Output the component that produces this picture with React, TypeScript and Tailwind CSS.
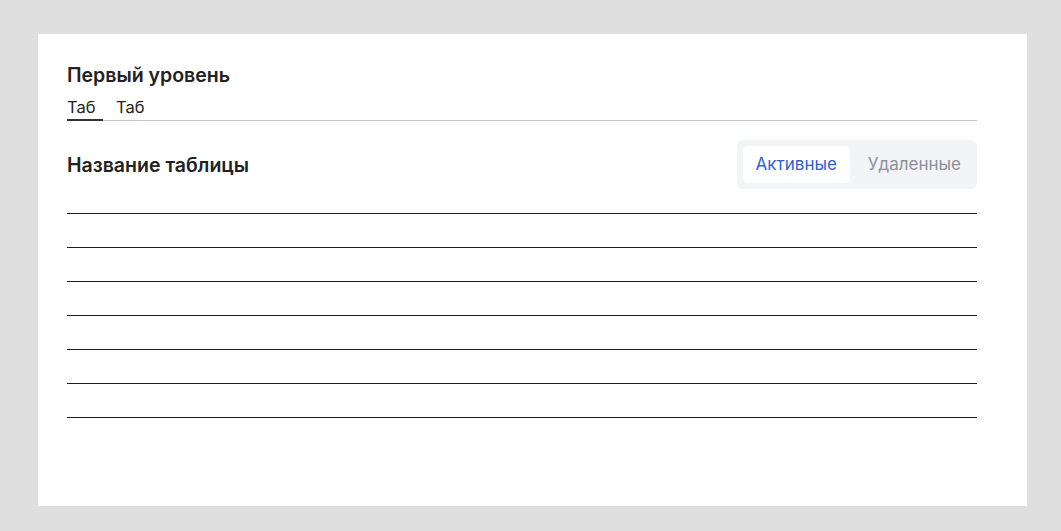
import React from "react";

export default function App() {
  const rows = [0, 1, 2, 3, 4, 5];
  return (
    <div className="w-[1061px] h-[531px] bg-[#dfdfdf] pt-[34px] pl-[38px] font-['Inter',sans-serif]">
      <div className="w-[989px] h-[472px] bg-white pl-[29px] pr-[50px] pt-[29px]">
        <div className="text-[19.5px] leading-[24px] font-semibold text-[#222]">Первый уровень</div>
        <div className="flex gap-[13px] border-b border-[#c6c6c6] mt-[8px] h-[26px] text-[16.5px] leading-[24px] text-[#222]">
          <div className="w-[36px] h-[26px] border-b-2 border-[#333] -mb-px">Таб</div>
          <div>Таб</div>
        </div>
        <div className="flex items-center justify-between mt-[19px]">
          <div className="text-[19.5px] leading-[24px] font-semibold text-[#222]">Название таблицы</div>
          <div className="flex bg-[#f3f4f7] rounded-[6px] p-[6px] text-[17px]">
            <div className="bg-white rounded-[5px] h-[37px] px-[13px] flex items-center text-[#2d5fd3]">Активные</div>
            <div className="h-[37px] px-[10px] flex items-center text-[#8c9099] ml-[8px]">Удаленные</div>
          </div>
        </div>
        <div className="mt-[24px] border-t border-[#1e1e1e]">
          {rows.map((r) => (
            <div key={r} className="h-[34px] border-b border-[#1e1e1e]" />
          ))}
        </div>
      </div>
    </div>
  );
}
